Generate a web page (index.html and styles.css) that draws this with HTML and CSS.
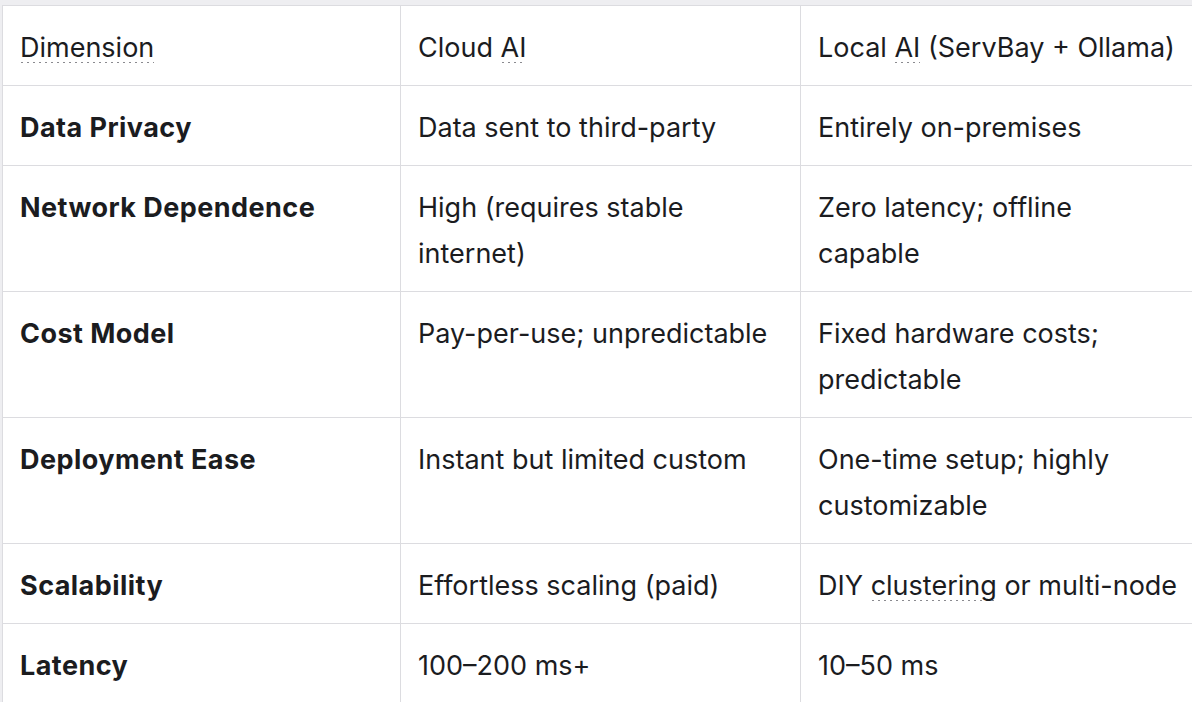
FILE: index.html
```html
<!DOCTYPE html>
<html lang="en">
<head>
<meta charset="utf-8">
<title>Cloud AI vs Local AI</title>
<link rel="stylesheet" href="styles.css">
</head>
<body>
<div class="frame">
  <table class="cmp">
    <colgroup>
      <col class="c1"><col class="c2"><col class="c3">
    </colgroup>
    <thead>
      <tr>
        <th><span class="dot">Dimension</span></th>
        <th>Cloud <span class="dot">AI</span></th>
        <th>Local <span class="dot">AI</span> (ServBay + Ollama)</th>
      </tr>
    </thead>
    <tbody>
      <tr><td><strong>Data Privacy</strong></td><td>Data sent to third-party</td><td>Entirely on-premises</td></tr>
      <tr><td><strong>Network Dependence</strong></td><td>High (requires stable internet)</td><td>Zero latency; offline capable</td></tr>
      <tr><td><strong>Cost Model</strong></td><td>Pay-per-use; unpredictable</td><td>Fixed hardware costs; predictable</td></tr>
      <tr><td><strong>Deployment Ease</strong></td><td>Instant but limited custom</td><td>One-time setup; highly customizable</td></tr>
      <tr><td><strong>Scalability</strong></td><td>Effortless scaling (paid)</td><td>DIY <span class="dot">clustering</span> or multi-node</td></tr>
      <tr><td><strong>Latency</strong></td><td>100–200 ms+</td><td>10–50 ms</td></tr>
    </tbody>
  </table>
</div>
</body>
</html>
```
FILE: styles.css
```css
html, body {
  margin: 0;
  padding: 0;
  background: #eeeef1;
  height: 100%;
  overflow: hidden;
}
.frame {
  padding: 5px 0 0 2px;
  overflow: hidden;
  height: 100%;
  box-sizing: border-box;
}
.cmp {
  border-collapse: collapse;
  table-layout: fixed;
  width: 1196px;
  background: #ffffff;
  font-family: Inter, "Noto Sans", sans-serif;
  font-size: 27px;
  line-height: 46px;
  color: #1b1c1f;
}
.c1 { width: 398px; }
.c2 { width: 400px; }
.c3 { width: 398px; }
.cmp th, .cmp td {
  border: 1px solid #dcdce0;
  padding: 19px 18px 14px 17px;
  text-align: left;
  vertical-align: top;
  font-weight: 400;
}
.cmp td strong {
  font-weight: 700;
  letter-spacing: 0.45px;
}
.dot {
  background-image: linear-gradient(to right, #8a8a8f 2px, transparent 2px);
  background-size: 6px 1px;
  background-repeat: repeat-x;
  background-position: 1px calc(100% - 1px);
}
```
